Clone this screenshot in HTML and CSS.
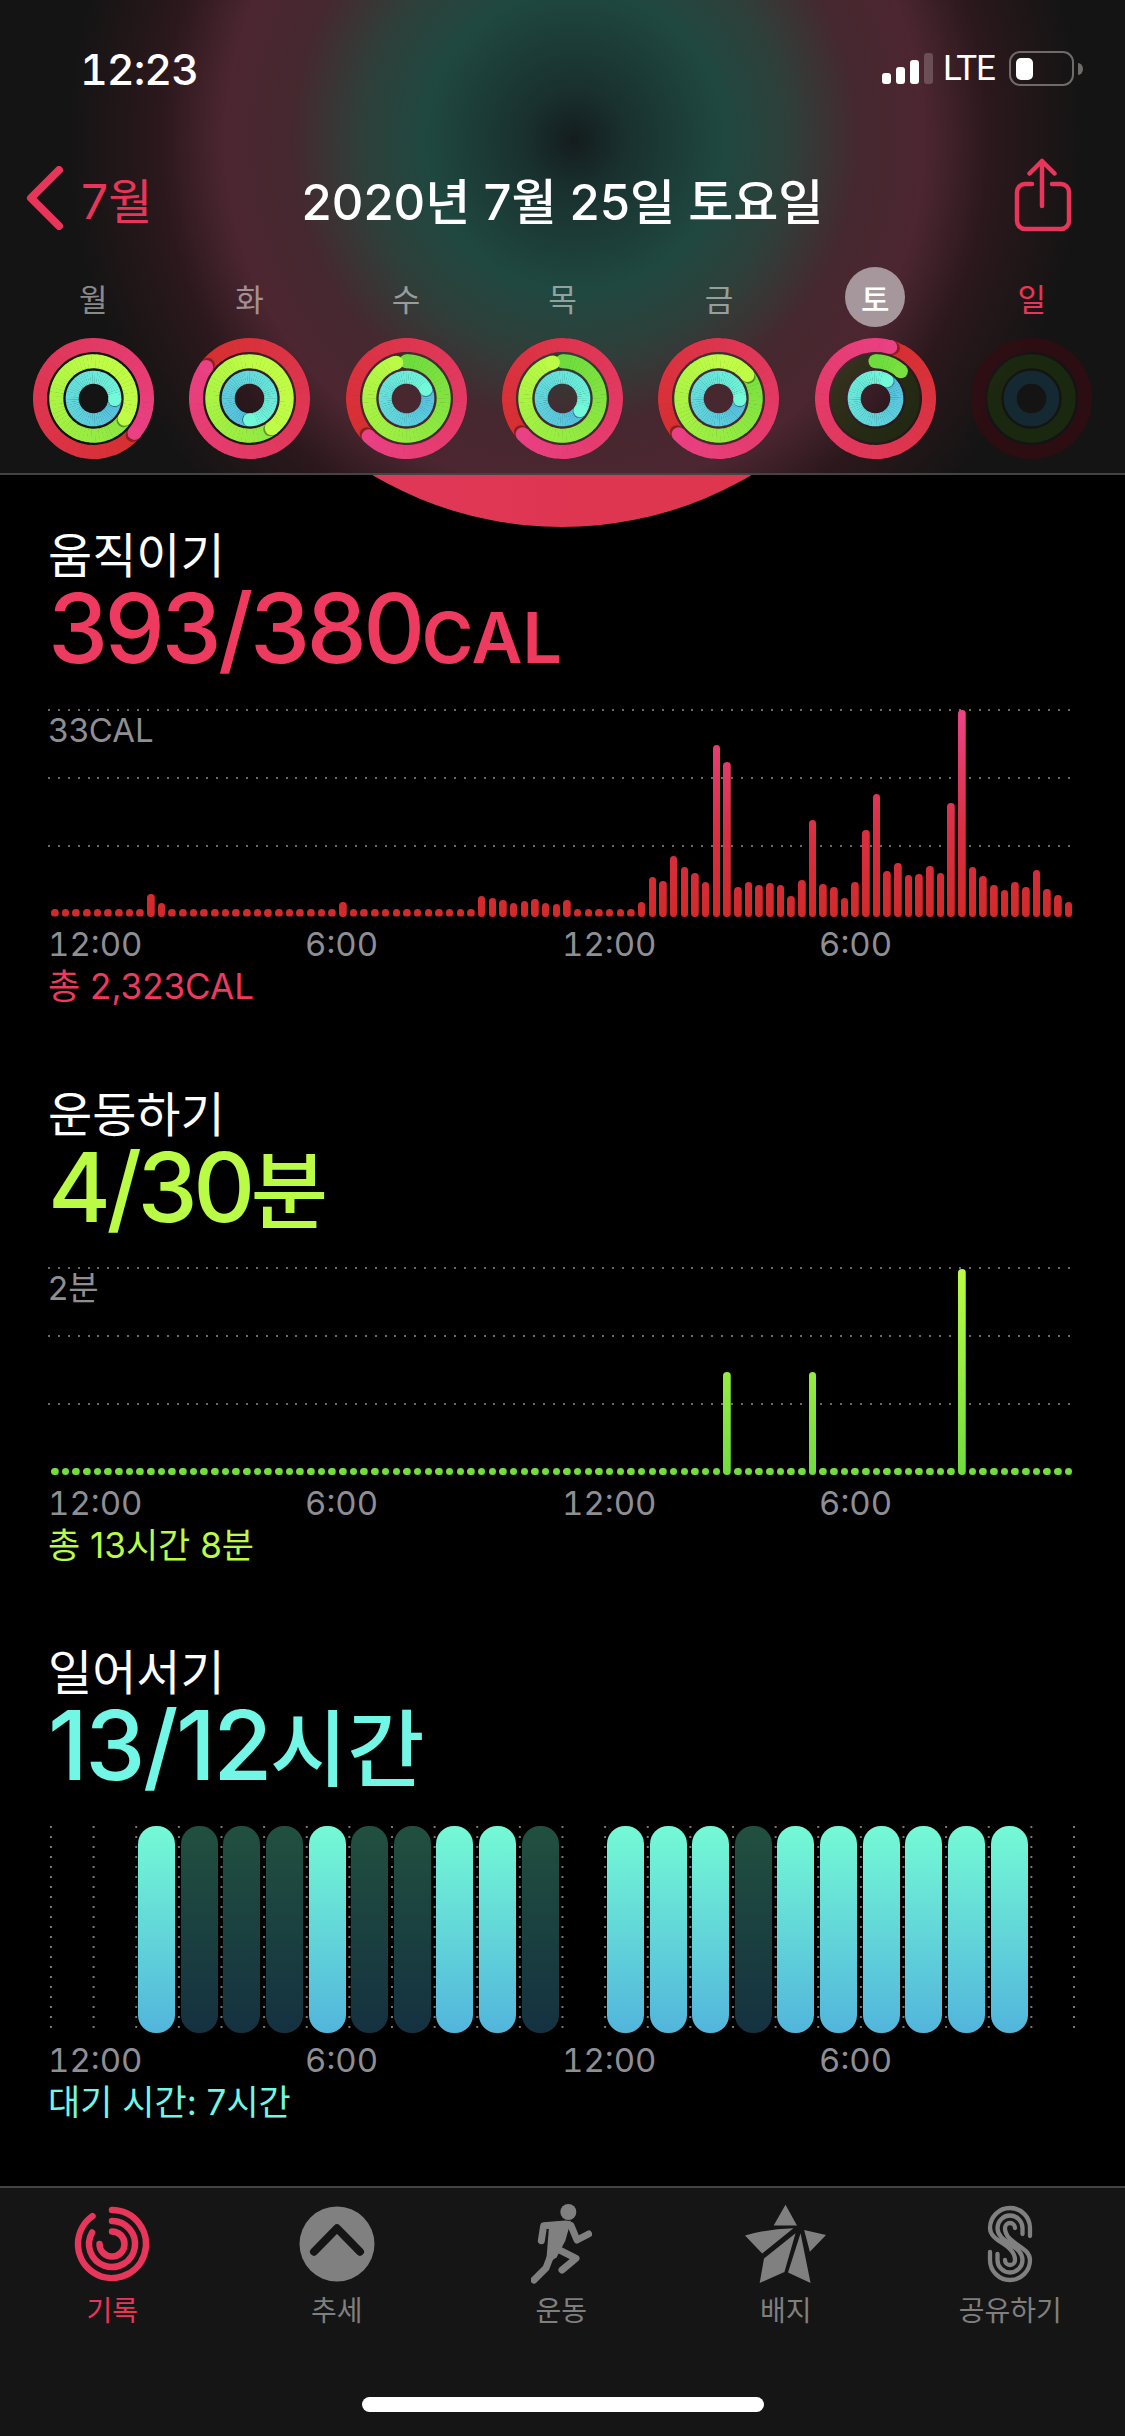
FILE: index.html
```html
<!DOCTYPE html>
<html lang="ko">
<head>
    <meta charset="UTF-8">
    <meta name="viewport" content="width=device-width, initial-scale=1.0">
    <title>활동</title>
    <link rel="stylesheet" href="styles.css">
</head>
<body>
    <!-- Header -->
    <header class="header">
        <div class="status-bar">
            <div class="clock">12:23</div>
            <div class="status-icons">
                <svg class="signal" width="51" height="31" viewBox="0 0 51 31">
                    <rect x="0" y="20" width="9" height="11" rx="3" fill="#fff"/>
                    <rect x="14" y="14" width="9" height="17" rx="3" fill="#fff"/>
                    <rect x="28" y="7" width="9" height="24" rx="3" fill="#fff"/>
                    <rect x="42" y="0" width="9" height="31" rx="3" fill="#fff" opacity=".2"/>
                </svg>
                <span class="lte">LTE</span>
                <svg class="battery" width="74" height="36" viewBox="0 0 74 36">
                    <rect x="1" y="1" width="63" height="33" rx="10" fill="none" stroke="#6f6b6b" stroke-width="2"/>
                    <rect x="7" y="7" width="17" height="22" rx="5" fill="#fff"/>
                    <path d="M69 12a5 6 0 0 1 0 12z" fill="#6f6b6b"/>
                </svg>
            </div>
        </div>

        <nav class="nav">
            <div class="back">
                <svg width="38" height="64" viewBox="0 0 38 64">
                    <path d="M33 4L5 32L33 60" fill="none" stroke="#e8365a" stroke-width="8" stroke-linecap="round" stroke-linejoin="round"/>
                </svg>
                <span>7월</span>
            </div>
            <div class="nav-title">2020년 7월 25일 토요일</div>
            <svg class="share" width="62" height="76" viewBox="0 0 62 76">
                <path d="M20 26H13a8 8 0 0 0-8 8V63a8 8 0 0 0 8 8H49a8 8 0 0 0 8-8V34a8 8 0 0 0-8-8H40M30 48V3M17.5 15.5L30 3L42.5 15.5" fill="none" stroke="#e8365a" stroke-width="4.5" stroke-linecap="round" stroke-linejoin="round"/>
            </svg>
        </nav>

        <div class="week">
            <div class="day">월</div>
            <div class="day">화</div>
            <div class="day">수</div>
            <div class="day">목</div>
            <div class="day">금</div>
            <div class="day today"><span>토</span></div>
            <div class="day sunday">일</div>
        </div>
        <div class="rings" id="rings"></div>
    </header>

    <!-- Charts -->
    <main class="content">
        <div class="dome"></div>

        <section class="metric move">
            <div class="metric-name">움직이기</div>
            <div class="metric-value">393/380<span class="unit-latin">CAL</span></div>
            <div class="chart" id="moveChart"><div class="chart-max">33CAL</div></div>
            <div class="axis"><span>12:00</span><span>6:00</span><span>12:00</span><span>6:00</span></div>
            <div class="metric-total">총 2,323CAL</div>
        </section>

        <section class="metric exercise">
            <div class="metric-name">운동하기</div>
            <div class="metric-value">4/30<span class="unit-hangul">분</span></div>
            <div class="chart" id="exerciseChart"><div class="chart-max">2분</div></div>
            <div class="axis"><span>12:00</span><span>6:00</span><span>12:00</span><span>6:00</span></div>
            <div class="metric-total">총 13시간 8분</div>
        </section>

        <section class="metric stand">
            <div class="metric-name">일어서기</div>
            <div class="metric-value">13/12<span class="unit-hangul">시간</span></div>
            <div class="stand-chart" id="standChart"></div>
            <div class="axis"><span>12:00</span><span>6:00</span><span>12:00</span><span>6:00</span></div>
            <div class="metric-total">대기 시간: 7시간</div>
        </section>
    </main>

    <!-- Tab bar -->
    <footer class="tabbar">
        <div class="tabs">
            <div class="tab active">
                <svg width="80" height="80" viewBox="0 0 80 80">
                    <path d="M40 6A34 34 0 1 1 20.5 12.15M40 17A23 23 0 1 1 20.1 28.5M40 27.5A12.5 12.5 0 1 1 27.5 40" fill="none" stroke="#e8365a" stroke-width="6.5" stroke-linecap="round"/>
                </svg>
                <span>기록</span>
            </div>
            <div class="tab">
                <svg width="80" height="80" viewBox="0 0 80 80">
                    <circle cx="40" cy="40" r="37.5" fill="#808080"/>
                    <path d="M17 47.7L40 24.3L63 47.7" fill="none" stroke="#151515" stroke-width="8" stroke-linecap="round" stroke-linejoin="round"/>
                </svg>
                <span>추세</span>
            </div>
            <div class="tab">
                <svg width="61" height="80" viewBox="95 40 183 240">
                    <circle cx="207" cy="64" r="24" fill="#808080"/>
                    <path d="M150 95L215 90L198 150L172 200L140 222Z" fill="#808080"/>
                    <path d="M126 150L133 105L200 100M215 105L233 148L268 130M160 180L140 232L104 268M165 170L230 203L188 238" fill="none" stroke="#808080" stroke-width="21" stroke-linecap="round" stroke-linejoin="round"/>
                </svg>
                <span>운동</span>
            </div>
            <div class="tab">
                <svg width="81" height="80" viewBox="517 78 226 238" preserveAspectRatio="none">
                    <path d="M630 80L662 142H597ZM517 172Q580 152 652 150L565 225ZM682 155L743 170L698 220ZM658 165L570 240L558 313L627 280ZM672 165L700 313L637 282Z" fill="#808080"/>
                </svg>
                <span>배지</span>
            </div>
            <div class="tab">
                <svg width="48" height="80" viewBox="0 -2 48 80">
                    <path d="M44 30V22A20 20 0 0 0 4 22C4 36 29 38 29 54A5 5 0 0 1 19 54M36.500 28V22A12.500 12.500 0 0 0 11.500 22C11.500 37 36.500 39 36.500 54A12.500 12.500 0 0 1 11.500 54V48M4 46V54A20 20 0 0 0 44 54C44 40 19 38 19 22A5 5 0 0 1 29 22" fill="none" stroke="#808080" stroke-width="4.300" stroke-linecap="round"/>
                </svg>
                <span>공유하기</span>
            </div>
        </div>
        <div class="home-indicator"></div>
    </footer>

    <script src="script.js"></script>
</body>
</html>
```

FILE: styles.css
```css
* {
    box-sizing: border-box;
    margin: 0;
    padding: 0;
    font-family: Inter, "Noto Sans CJK KR", sans-serif;
}
body {
    display: flex;
    flex-direction: column;
    width: 1125px;
    height: 2436px;
    overflow: hidden;
    background-color: #000;
    color: #fff;
}

/* Header */
.header {
    position: relative;
    z-index: 1;
    flex: none;
    height: 475px;
    padding-top: 46px;
    border-bottom: 2px solid #444;
    background: radial-gradient(circle at 575px 140px, #141c1d 0, #19302f 50px, #1f4840 150px, #2f3f3a 215px, #46282f 285px, #4c2631 350px, #2b181c 415px, #151414 505px);
}
.status-bar {
    display: flex;
    justify-content: space-between;
    align-items: center;
    height: 45px;
    padding: 0 42px 0 80px;
}
.clock {
    font-size: 43px;
    font-weight: 500;
    letter-spacing: -1px;
    font-variant-numeric: tabular-nums;
}
.status-icons {
    display: flex;
    align-items: center;
    gap: 10px;
}
.lte {
    font-family: Roboto, sans-serif;
    font-size: 35px;
    letter-spacing: -1px;
}
.battery {
    margin-left: 4px;
}
.nav {
    position: relative;
    display: flex;
    justify-content: space-between;
    align-items: center;
    height: 80px;
    margin-top: 67px;
    padding: 0 51px 0 26px;
}
.back {
    display: flex;
    align-items: center;
    gap: 17px;
    font-size: 48px;
    color: #e8365a;
}
.nav-title {
    position: absolute;
    left: 0;
    right: 0;
    text-align: center;
    font-size: 49px;
    font-weight: 500;
    pointer-events: none;
}
.share {
    margin-top: -4px;
}
.week {
    display: grid;
    grid-template-columns: repeat(7, 1fr);
    height: 60px;
    margin-top: 29px;
    padding: 0 15px;
}
.day {
    display: flex;
    justify-content: center;
    align-items: center;
    font-size: 31px;
    color: rgba(255, 255, 255, 0.5);
}
.today span {
    display: flex;
    justify-content: center;
    align-items: center;
    width: 60px;
    height: 60px;
    border-radius: 50%;
    background-color: #a5979c;
    color: #fff;
    font-weight: 500;
}
.sunday {
    color: #e8365a;
}
.rings {
    display: grid;
    grid-template-columns: repeat(7, 1fr);
    justify-items: center;
    margin-top: 11px;
    padding: 0 15px;
}
.rings svg {
    display: block;
}

/* Charts */
.content {
    position: relative;
    flex: 1;
    padding-top: 50px;
    overflow: hidden;
}
.dome {
    position: absolute;
    left: 190px;
    top: -692px;
    width: 744px;
    height: 744px;
    border-radius: 50%;
    background: linear-gradient(90deg, #e0385c, #dd3548);
}
.metric {
    position: relative;
    padding: 3px 0 77.5px 48px;
}
.metric-name {
    font-size: 48px;
    line-height: 56px;
}
.metric-value {
    height: 88px;
    font-size: 96px;
    font-weight: 500;
    line-height: 88px;
    letter-spacing: -3.6px;
}
.exercise .metric-value {
    letter-spacing: -4.5px;
}
.stand .metric-value {
    letter-spacing: -2.5px;
}
.unit-latin {
    font-size: 70px;
    font-weight: 600;
    letter-spacing: 0;
}
.metric-value .unit-hangul {
    font-size: 84px;
    letter-spacing: 0;
}
.chart {
    position: relative;
    display: flex;
    align-items: flex-end;
    gap: 3.18px;
    width: 1026px;
    height: 208px;
    margin-top: 36.5px;
    padding-left: 3px;
    background-image:
        repeating-linear-gradient(90deg, #6a6a6a 0 2px, transparent 2px 9.9px),
        repeating-linear-gradient(90deg, #6a6a6a 0 2px, transparent 2px 9.9px),
        repeating-linear-gradient(90deg, #6a6a6a 0 2px, transparent 2px 9.9px);
    background-size: 1022px 2px;
    background-position: 0 0, 0 68px, 0 136px;
    background-repeat: no-repeat;
}
.chart-max {
    position: absolute;
    left: 0;
    top: 1px;
    font-size: 33px;
    line-height: 40px;
    color: #8e8e93;
}
.bar {
    flex: none;
    width: 7.5px;
    border-radius: 4px;
    background-repeat: no-repeat;
    background-size: 100% 208px;
    background-position: bottom;
}
.move .bar {
    background-image: linear-gradient(0deg, #d02a2a, #d92f42 40%, #e03a62 70%, #ee4488);
}
.exercise .bar {
    background-image: linear-gradient(0deg, #6fdc3e, #bdfc46);
}
.stand-chart {
    display: grid;
    grid-template-columns: repeat(24, 42.64px);
    justify-items: center;
    width: 1026px;
    height: 207px;
    margin-top: 36.5px;
    margin-left: 2px;
    background-image: radial-gradient(circle at 1px 1px, #777 1px, transparent 1.3px);
    background-size: 42.64px 10px;
}
.stand-bar {
    width: 37px;
    height: 207px;
    border-radius: 18px;
    background-image: linear-gradient(#21503f, #143140);
}
.stand-bar.on {
    background-image: linear-gradient(#74fad5, #52b5dc);
}
.stand-bar.none {
    background-image: none;
}
.axis {
    display: grid;
    grid-template-columns: repeat(4, 257px);
    height: 40px;
    margin-top: 7.5px;
    font-size: 33px;
    line-height: 40px;
    color: #8e8e93;
    font-variant-numeric: tabular-nums;
}
.metric-total {
    height: 40px;
    margin-top: 2px;
    font-size: 35px;
    line-height: 40px;
}
.move .metric-value,
.move .metric-total {
    color: #ee3a5e;
}
.exercise .metric-value,
.exercise .metric-total {
    color: #b9fb45;
}
.stand .metric-value,
.stand .metric-total {
    color: #72f7e6;
}

/* Tab bar */
.tabbar {
    display: flex;
    flex: none;
    flex-direction: column;
    align-items: center;
    height: 250px;
    padding-top: 16px;
    border-top: 2px solid #444;
    background-color: #151515;
}
.tabs {
    display: grid;
    grid-template-columns: repeat(5, 224.5px);
    width: 100%;
}
.tab {
    display: flex;
    flex-direction: column;
    align-items: center;
    font-size: 28px;
    line-height: 36px;
    color: #7f7f7f;
}
.tab svg {
    display: block;
    margin-bottom: 9px;
}
.tab.active {
    color: #e8365a;
}
.home-indicator {
    width: 402px;
    height: 15px;
    margin-top: auto;
    margin-bottom: 24px;
    border-radius: 8px;
    background-color: #fff;
}
```

FILE: script.js
```js
// Ring end angles in degrees, above 360 means the ring went past its goal
const weekRings = [
    [490, 483, 453],
    [666, 503, 540],
    [585, 344, 425],
    [588, 345, 485],
    [588, 411, 453],
    [376, 43, 393],
    [0, 0, 0]
];

// the green ring keeps its angle colour on the second lap
const ringStyles = [
    { r: 53.5, w: 14, from: [214, 47, 48], to: [234, 64, 132], track: 'rgba(50, 12, 18, 0.8)' },
    { r: 37.2, w: 14, from: [111, 220, 62], to: [191, 252, 70], track: 'rgba(30, 60, 10, 0.5)', byAngle: true },
    { r: 21.3, w: 13, from: [85, 191, 224], to: [114, 249, 216], track: 'rgba(20, 45, 55, 0.85)' }
];

const moveHeights = [
    0, 0, 0, 0, 0, 0, 0, 0, 0, 23, 14, 0, 0, 0, 0, 0, 0, 0, 0, 0, 8, 0, 0, 0,
    0, 0, 0, 15, 0, 0, 0, 0, 0, 0, 0, 0, 0, 0, 0, 0, 21, 19, 17, 14, 16, 18, 14, 13,
    17, 0, 0, 0, 0, 0, 0, 15, 40, 36, 61, 50, 44, 35, 172, 155, 30, 35, 32, 34, 32, 21, 37, 97,
    33, 30, 19, 35, 87, 123, 46, 54, 42, 43, 51, 44, 114, 207, 50, 41, 32, 27, 35, 30, 47, 28, 22, 15
];

const exerciseHeights = { 63: 103, 71: 103, 85: 206 };

// 0 empty, 1 hour missed, 2 stood up
const standHours = [0, 0, 2, 1, 1, 1, 2, 1, 1, 2, 2, 1, 0, 2, 2, 2, 1, 2, 2, 2, 2, 2, 2, 0];

function point(r, deg) {
    const a = deg * Math.PI / 180;
    return (r * Math.sin(a)).toFixed(2) + ' ' + (-r * Math.cos(a)).toFixed(2);
}

function mix(from, to, t) {
    const c = from.map((v, i) => Math.round(v + (to[i] - v) * t));
    return `rgb(${c[0]}, ${c[1]}, ${c[2]})`;
}

function capAt(style, deg, color) {
    const p = point(style.r, deg).split(' ');
    return `<circle cx="${p[0]}" cy="${p[1]}" r="${style.w / 2}" fill="${color}"/>`;
}

function drawRing(style, end) {
    let out = `<circle r="${style.r}" fill="none" stroke="${style.track}" stroke-width="${style.w}"/>`;
    if (end === 0) return out;

    const start = end > 360 ? end - 360 : 0;
    const step = 6;
    const shade = deg => {
        const t = style.byAngle ? Math.min(deg / 360, 1) : (deg - start) / 360;
        return mix(style.from, style.to, t);
    };
    for (let deg = start; deg < end; deg += step) {
        const next = Math.min(deg + step + 0.6, end);
        out += `<path d="M${point(style.r, deg)}A${style.r} ${style.r} 0 0 1 ${point(style.r, next)}" fill="none" stroke="${shade(deg)}" stroke-width="${style.w}"/>`;
    }

    if (end > 360) {
        out += `<g opacity="0.35">${capAt(style, end + 3, '#000')}</g>`;
    } else {
        out += capAt(style, 0, shade(0));
    }
    return out + capAt(style, end, shade(end));
}

const ringsBox = document.getElementById('rings');
weekRings.forEach(day => {
    const rings = ringStyles.map((style, i) => drawRing(style, day[i])).join('');
    ringsBox.innerHTML += `<svg width="121" height="121" viewBox="-60.5 -60.5 121 121">${rings}</svg>`;
});

function addBar(box, height) {
    const bar = document.createElement('div');
    bar.className = 'bar';
    bar.style.height = Math.max(height, 7.5) + 'px';
    box.appendChild(bar);
}

const moveChart = document.getElementById('moveChart');
moveHeights.forEach(h => addBar(moveChart, h));

const exerciseChart = document.getElementById('exerciseChart');
for (let i = 0; i < 96; i++) {
    addBar(exerciseChart, exerciseHeights[i] || 0);
}

const standChart = document.getElementById('standChart');
standHours.forEach(hour => {
    const bar = document.createElement('div');
    bar.className = 'stand-bar' + (hour === 2 ? ' on' : hour === 0 ? ' none' : '');
    standChart.appendChild(bar);
});
```
